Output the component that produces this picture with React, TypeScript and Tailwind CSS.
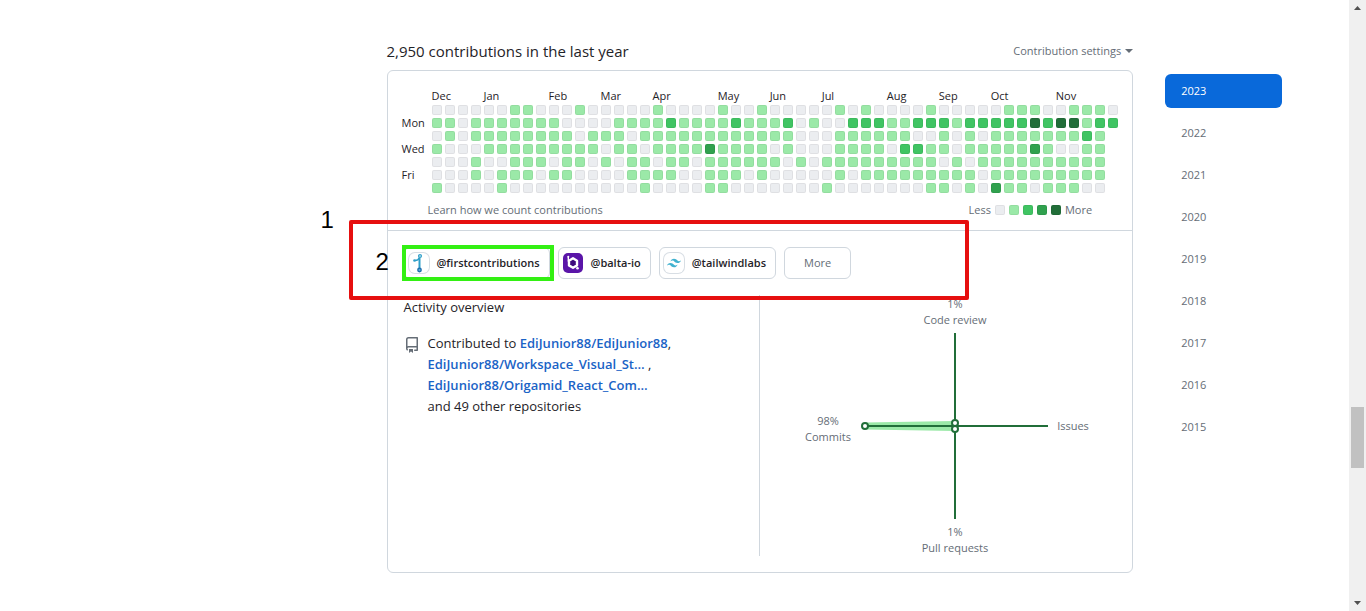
import { clsx } from 'clsx'

// One string per weekday (Sun..Sat), one digit per week, 0 = none, 4 = most
const levels = [
  '00000011000100000100001001000001010000100000111001110',
  '11011111110000111121111211120100222112221222224244122',
  '0101111111101110111111111111000111111001010111111121',
  '1000111111111011011113111101000111102211011111310011',
  '0001001110110101101101111110101111111110101111111111',
  '0001011101100001111001110100000101111111110111111111',
  '1000010000000000100001100000001000000011010311011100',
]

const weekdays = ['', 'Mon', '', 'Wed', '', 'Fri', '']

const months = [
  { name: 'Dec', weeks: 4 },
  { name: 'Jan', weeks: 5 },
  { name: 'Feb', weeks: 4 },
  { name: 'Mar', weeks: 4 },
  { name: 'Apr', weeks: 5 },
  { name: 'May', weeks: 4 },
  { name: 'Jun', weeks: 4 },
  { name: 'Jul', weeks: 5 },
  { name: 'Aug', weeks: 4 },
  { name: 'Sep', weeks: 4 },
  { name: 'Oct', weeks: 5 },
  { name: 'Nov', weeks: 5 },
]

const levelClass: Record<string, string> = {
  '0': 'bg-[#ebedf0]',
  '1': 'bg-[#9be9a8]',
  '2': 'bg-[#40c463]',
  '3': 'bg-[#30a14e]',
  '4': 'bg-[#216e39]',
}

const years = [2023, 2022, 2021, 2020, 2019, 2018, 2017, 2016, 2015]

function Swatch({ level }: { level: string }) {
  return <div className={clsx('size-[10px] rounded-xs border border-black/5', levelClass[level])} />
}

function ContributionGraph() {
  return (
    <table className="border-separate border-spacing-[3px] table-fixed w-[722px]">
      <colgroup>
        <col className="w-[27px]" />
        <col span={53} className="w-[10px]" />
      </colgroup>
      <thead>
        <tr className="h-3">
          <td />
          {months.map((m) => (
            <th key={m.name} colSpan={m.weeks} className="p-0 text-left font-normal text-[11px] leading-3">
              {m.name}
            </th>
          ))}
        </tr>
      </thead>
      <tbody>
        {levels.map((row, day) => (
          <tr key={day} className="h-[10px]">
            <th className="p-0 text-left font-normal">
              <div className="h-[10px] text-[11px] leading-[10px]">{weekdays[day]}</div>
            </th>
            {row.split('').map((level, week) => (
              <td key={week} className="p-0">
                <Swatch level={level} />
              </td>
            ))}
          </tr>
        ))}
      </tbody>
    </table>
  )
}

function BranchIcon() {
  return (
    <svg viewBox="0 0 20 20" className="size-full" fill="none" stroke="#2f9fc9" strokeWidth="2">
      <path d="M10.5 5V16" />
      <path d="M10.5 4.5C9.500 7 8 7.500 6 7.500" strokeWidth="1.600" />
      <circle cx="11" cy="3" r="1.400" fill="#fff" strokeWidth="1.300" />
      <circle cx="5.500" cy="7.500" r="1.300" fill="#2f9fc9" stroke="none" />
      <circle cx="10.500" cy="17" r="1.700" fill="#5fb4dc" strokeWidth="1.400" stroke="#1f6fae" />
    </svg>
  )
}

function BaltaIcon() {
  return (
    <svg viewBox="0 0 20 20" className="size-full">
      <rect width="20" height="20" rx="5" fill="#5a15a8" />
      <path d="M10 5.300 14 7.700v4.700L10 14.700 6 12.400V7.700z" fill="#3d0a7d" stroke="#fff" strokeWidth="2.400" strokeLinejoin="round" />
      <path d="M5.300 3.500v5" stroke="#fff" strokeWidth="1.400" />
      <circle cx="5.300" cy="3.800" r="1" fill="#fff" />
      <circle cx="14.500" cy="15.300" r="1.300" fill="#fff" />
    </svg>
  )
}

function TailwindIcon() {
  return (
    <svg viewBox="0 0 24 24" className="size-full p-[3px]" fill="#3fb1cf">
      <path d="M12 4.800c-3.200 0-5.200 1.600-6 4.800 1.200-1.600 2.600-2.200 4.200-1.800.913.228 1.565.890 2.288 1.624C13.666 10.618 15.027 12 18.001 12c3.200 0 5.200-1.600 6-4.800-1.200 1.600-2.600 2.200-4.200 1.800-.913-.228-1.565-.890-2.288-1.624C16.337 6.182 14.976 4.800 12.001 4.800zM6 12c-3.200 0-5.200 1.600-6 4.800 1.200-1.600 2.600-2.200 4.200-1.800.913.228 1.565.890 2.288 1.624 1.177 1.194 2.538 2.576 5.512 2.576 3.200 0 5.200-1.600 6-4.800-1.200 1.600-2.600 2.200-4.200 1.800-.913-.228-1.565-.890-2.288-1.624C10.337 13.382 8.976 12 6.001 12z" />
    </svg>
  )
}

const orgs = [
  { name: '@firstcontributions', icon: <BranchIcon />, framed: true },
  { name: '@balta-io', icon: <BaltaIcon />, framed: false },
  { name: '@tailwindlabs', icon: <TailwindIcon />, framed: true },
]

function RepoIcon() {
  return (
    <svg viewBox="0 0 16 16" className="mt-1 size-4 shrink-0" fill="#656d76">
      <path d="M2 2.500A2.500 2.500 0 0 1 4.500 0h8.750a.75.75 0 0 1 .75.750v12.500a.75.75 0 0 1-.75.750h-2.500a.75.75 0 0 1 0-1.500h1.750v-2h-8a1 1 0 0 0-.714 1.700.75.75 0 1 1-1.072 1.050A2.495 2.495 0 0 1 2 11.500Zm10.500-1h-8a1 1 0 0 0-1 1v6.708A2.486 2.486 0 0 1 4.500 9h8ZM5 12.250a.25.25 0 0 1 .250-.250h3.500a.25.25 0 0 1 .250.250v3.250a.25.25 0 0 1-.400.200l-1.450-1.087a.249.249 0 0 0-.300 0L5.400 15.700a.25.25 0 0 1-.400-.200Z" />
    </svg>
  )
}

function ActivityChart() {
  return (
    <svg viewBox="0 0 325 260" className="h-[260px] w-[325px]" fontSize="11">
      <path d="M74 128.500 164 127v6L74 131.500z" fill="#9be9a8" stroke="#9be9a8" strokeWidth="4" strokeLinejoin="round" />
      <path d="M164 37v186M74 130h183" stroke="#216e39" strokeWidth="2" />
      <g fill="#fff" stroke="#216e39" strokeWidth="2">
        <circle cx="74" cy="130" r="3" />
        <circle cx="164" cy="127" r="3" />
        <circle cx="164" cy="133" r="3" />
      </g>
      <g fill="#656d76" textAnchor="middle">
        <text x="164" y="12">1%</text>
        <text x="164" y="28">Code review</text>
        <text x="37" y="129">98%</text>
        <text x="37" y="145">Commits</text>
        <text x="282" y="134">Issues</text>
        <text x="164" y="240">1%</text>
        <text x="164" y="256">Pull requests</text>
      </g>
    </svg>
  )
}

function Scrollbar() {
  return (
    <div className="flex h-screen w-[17px] shrink-0 flex-col items-center bg-[#f0f0f0]">
      <svg viewBox="0 0 17 17" className="size-[17px]" fill="#505050">
        <path d="M8.500 6 12 10H5z" />
      </svg>
      <div className="grow-[390]" />
      <div className="h-[61px] w-[13px] bg-[#c1c1c1]" />
      <div className="grow-[126]" />
      <svg viewBox="0 0 17 17" className="size-[17px]" fill="#505050">
        <path d="M8.500 11 12 7H5z" />
      </svg>
    </div>
  )
}

export default function App() {
  return (
    <div className="flex h-screen overflow-hidden bg-white font-['Segoe_UI','Open_Sans',sans-serif] text-[#1f2328]">
      <div className="min-w-0 flex-1">
        <div className="mx-auto flex max-w-[1280px] gap-6 px-8">
          <div className="w-[296px] shrink-0" />
          <main className="grid min-w-0 flex-1 grid-cols-6 pt-10">
            <section className="col-span-5">
              <div className="mb-2 flex items-center justify-between">
                <h2 className="text-[15px] leading-[22px]">2,950 contributions in the last year</h2>
                <button className="flex items-center gap-1 text-[11px] text-[#656d76]">
                  Contribution settings
                  <span className="border-x-4 border-t-4 border-x-transparent border-t-current" />
                </button>
              </div>

              <div className="relative rounded-md border border-[#d0d7de]">
                <div className="flex h-40 flex-col border-b border-[#d0d7de] pl-[11px] pt-4">
                  <ContributionGraph />
                  <div className="flex items-center justify-between pl-[29px] pr-10 pt-[6px] text-[11px] leading-4 text-[#656d76]">
                    <a href="#count">Learn how we count contributions</a>
                    <div className="flex items-center gap-1">
                      <span>Less</span>
                      {Object.keys(levelClass).map((level) => (
                        <Swatch key={level} level={level} />
                      ))}
                      <span>More</span>
                    </div>
                  </div>
                </div>

                <div className="flex gap-2 px-4 pt-4">
                  {orgs.map((org) => (
                    <button
                      key={org.name}
                      className="flex h-8 items-center gap-2 rounded-md border border-[#d0d7de] pl-1 pr-[9px] text-[11px] font-semibold"
                    >
                      <span className={clsx('size-5 rounded-md', org.framed && 'ring-1 ring-[#d8dee4]')}>{org.icon}</span>
                      {org.name}
                    </button>
                  ))}
                  <button className="h-8 rounded-md border border-[#d0d7de] px-[19px] text-[11px] text-[#656d76]">More</button>
                </div>

                <div className="flex px-4 py-4">
                  <div className="w-1/2 border-r border-[#d0d7de]">
                    <h3 className="text-[13px] leading-6">Activity overview</h3>
                    <div className="mt-[14px] flex gap-2 text-[13px] leading-[21px]">
                      <RepoIcon />
                      <div>
                        Contributed to{' '}
                        <a href="#r1" className="font-semibold text-[#1a63c6]">EdiJunior88/EdiJunior88</a>,
                        <br />
                        <a href="#r2" className="font-semibold text-[#1a63c6]">EdiJunior88/Workspace_Visual_St…</a> ,
                        <br />
                        <a href="#r3" className="font-semibold text-[#1a63c6]">EdiJunior88/Origamid_React_Com…</a>
                        <br />
                        and 49 other repositories
                      </div>
                    </div>
                  </div>
                  <div className="flex w-1/2 justify-end pt-px">
                    <ActivityChart />
                  </div>
                </div>

                {/* Callouts over the organisations row */}
                <span className="absolute -left-[67px] top-[135px] font-['Liberation_Sans',sans-serif] text-2xl leading-7 text-black">1</span>
                <div className="absolute -left-[39px] top-[149px] h-20 w-[620px] rounded-xs border-4 border-[#e60f0f]" />
                <span className="absolute -left-3 top-[177px] font-['Liberation_Sans',sans-serif] text-2xl leading-7 text-black">2</span>
                <div className="absolute left-[14px] top-[174px] h-9 w-[152px] border-4 border-[#33f013]" />
              </div>
            </section>

            <nav className="flex flex-col gap-2 pl-8 pt-[34px]">
              {years.map((year) => (
                <a
                  key={year}
                  href={`#${year}`}
                  className={clsx(
                    'rounded-md px-4 py-2 text-[11px] leading-[18px]',
                    year === 2023 ? 'bg-[#0969da] text-white' : 'text-[#656d76]',
                  )}
                >
                  {year}
                </a>
              ))}
            </nav>
          </main>
        </div>
      </div>
      <Scrollbar />
    </div>
  )
}
